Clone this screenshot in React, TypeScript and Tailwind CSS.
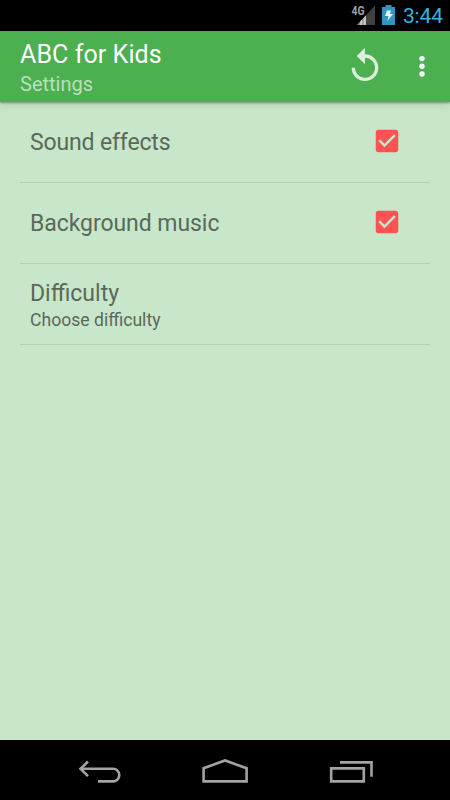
import React from "react";

const options = [
  { title: "Sound effects", tracking: "tracking-[-0.15px]", offset: "mt-[24px]" },
  { title: "Background music", tracking: "tracking-[-0.06px]", offset: "mt-[24.5px]" },
];

const StatusBar = () => (
  <div className="flex h-[31px] shrink-0 bg-black justify-end items-start pr-[7px]">
    <svg viewBox="0 0 24 22" className="w-6 h-[22px] mt-[4px] mr-[7px]">
      <path d="M24 1.5V21H6Z" fill="#404040" />
      <path d="M15 11.5V21H6Z" fill="#8c8c8c" />
      <path d="M15 11.5V21H12.5V14zM11.3 15.2V21H9V17.6z" fill="#c4c4c4" />
      <text
        x="0.5"
        y="10.5"
        fontSize="12"
        fontWeight="700"
        fill="#a0a0a0"
        textLength="13"
        lengthAdjust="spacingAndGlyphs"
        fontFamily="Roboto, sans-serif"
      >
        4G
      </text>
    </svg>
    <svg viewBox="0 0 13 20" className="w-[13px] h-5 mt-[5px] mr-[8px]">
      <path d="M3.5 0h6v2H13v18H0V2h3.5z" fill="#3594bd" />
      <path d="M5 5.5h4L8 9h3l-5.7 7 1.2-5H3z" fill="#e8f6fc" />
    </svg>
    <span className="text-[21px] leading-[31px] text-[#33b5e5] tracking-[-0.1px] mt-[1px]">3:44</span>
  </div>
);

const Header = () => (
  <header className="relative z-10 flex h-[71px] shrink-0 bg-[#4caf50] shadow-[0_1px_2px_rgba(0,0,0,0.35),0_3px_8px_rgba(0,0,0,0.1)] pl-5">
    <div className="flex flex-col whitespace-nowrap w-[325px]">
      <h1 className="text-[25px] leading-[30px] mt-[9px] tracking-[0.08px] text-white">ABC for Kids</h1>
      <h2 className="text-[20px] leading-[24px] mt-[2px] text-[#b9e0bb]">Settings</h2>
    </div>
    <svg viewBox="0 0 24 24" className="w-10 h-10 mt-[15px] shrink-0" fill="#dbefdc">
      <path d="M12 5V1L7 6l5 5V7c3.31 0 6 2.69 6 6s-2.69 6-6 6-6-2.69-6-6H4c0 4.42 3.58 8 8 8s8-3.58 8-8-3.58-8-8-8z" />
    </svg>
    <svg viewBox="0 0 10 24" className="w-[10px] h-6 mt-[23px] ml-[32px] shrink-0" fill="#fff">
      <circle cx="5" cy="4.6" r="2.7" />
      <circle cx="5" cy="12.3" r="2.7" />
      <circle cx="5" cy="20" r="2.7" />
    </svg>
  </header>
);

const CheckBox = () => (
  <svg viewBox="0 0 24 24" className="w-[30px] h-[30px] shrink-0" fill="#ff5252">
    <path d="M19 3H5c-1.11 0-2 .9-2 2v14c0 1.1.89 2 2 2h14c1.11 0 2-.9 2-2V5c0-1.1-.89-2-2-2zm-9 14l-5-5 1.41-1.41L10 14.17l7.59-7.59L19 8l-9 9z" />
  </svg>
);

const NavBar = () => (
  <nav className="flex h-[60px] shrink-0 bg-black items-start pt-[16px] pl-[76px]" aria-label="System">
    <svg viewBox="0 0 48 32" className="w-12 h-8" fill="none" stroke="#a3a3a3" strokeWidth="2.6">
      <path d="M4.5 12.8H37a6.2 6.2 0 0 1 0 12.6H22" />
      <path d="M12 5.5L4.5 12.8l7.5 7.3" />
    </svg>
    <svg viewBox="0 0 48 32" className="w-12 h-8 ml-[77px]" fill="none" stroke="#a3a3a3" strokeWidth="2.6">
      <path d="M2.6 25.4V12.2L24 4.5l21.6 7.7v13.2z" />
    </svg>
    <svg viewBox="0 0 48 32" className="w-12 h-8 ml-[78px]" fill="none" stroke="#a3a3a3" strokeWidth="2.6">
      <path d="M4.2 12.4h32.6v13H4.2zM13 6.4h31.5v14.4" />
    </svg>
  </nav>
);

const App = () => {
  return (
    <div className="flex flex-col w-[450px] h-[800px] overflow-hidden bg-[#c8e6c9] font-['Roboto',sans-serif] font-normal">
      <StatusBar />
      <Header />
      <main className="flex flex-col flex-1 px-5 text-[#5a695b]">
        {options.map((option) => (
          <div
            key={option.title}
            className="flex h-[81px] justify-between pl-[10px] pr-[28px] border-b border-[#b3ceb4] first:h-[80.5px] whitespace-nowrap"
          >
            <span className={`text-[23px] leading-[30px] mt-[26px] ${option.tracking}`}>{option.title}</span>
            <span className={option.offset}>
              <CheckBox />
            </span>
          </div>
        ))}
        <div className="flex flex-col h-[81px] pl-[10px] border-b border-[#b3ceb4] whitespace-nowrap">
          <span className="text-[23px] leading-[30px] mt-[15px]">Difficulty</span>
          <span className="text-[17.6px] leading-[22px]">Choose difficulty</span>
        </div>
      </main>
      <NavBar />
    </div>
  );
};

export default App;
